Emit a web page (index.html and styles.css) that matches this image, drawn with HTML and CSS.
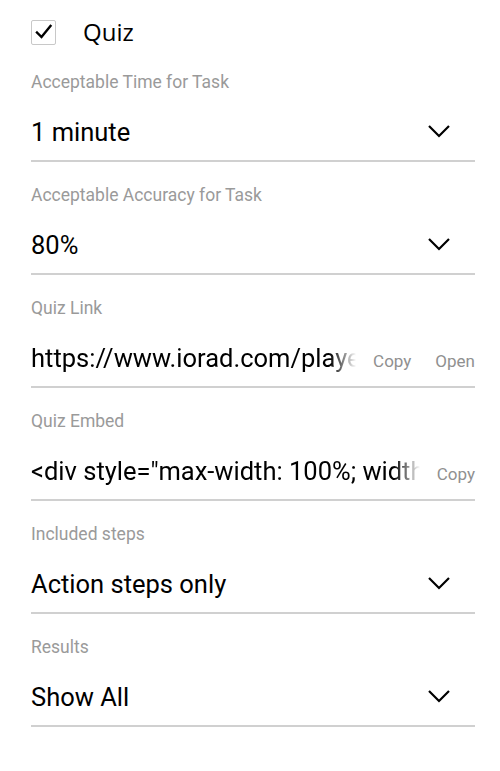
FILE: index.html
```html
<!DOCTYPE html>
<html>
<head>
<meta charset="utf-8">
<link rel="stylesheet" href="styles.css">
</head>
<body>
<div class="panel">
  <div class="quiz-row">
    <span class="checkbox">
      <svg width="18" height="16" viewBox="0 0 18 16"><polyline points="2,8.5 6.5,13 15.5,2" fill="none" stroke="#000" stroke-width="2.4" stroke-linecap="square"/></svg>
    </span>
    <span class="quiz-label">Quiz</span>
  </div>

  <div class="field">
    <div class="label">Acceptable Time for Task</div>
    <div class="row">
      <div class="value">1 minute</div>
      <svg class="chev" width="24" height="14" viewBox="0 0 24 14"><polyline points="2,2 12,12 22,2" fill="none" stroke="#000" stroke-width="2.2"/></svg>
    </div>
  </div>

  <div class="field">
    <div class="label">Acceptable Accuracy for Task</div>
    <div class="row">
      <div class="value">80%</div>
      <svg class="chev" width="24" height="14" viewBox="0 0 24 14"><polyline points="2,2 12,12 22,2" fill="none" stroke="#000" stroke-width="2.2"/></svg>
    </div>
  </div>

  <div class="field">
    <div class="label">Quiz Link</div>
    <div class="row">
      <div class="value fade">https://www.iorad.com/player/1234567/quiz</div>
      <span class="action first">Copy</span>
      <span class="action">Open</span>
    </div>
  </div>

  <div class="field">
    <div class="label">Quiz Embed</div>
    <div class="row">
      <div class="value fade">&lt;div style="max-width: 100%; width: 100%;"&gt;</div>
      <span class="action first">Copy</span>
    </div>
  </div>

  <div class="field">
    <div class="label">Included steps</div>
    <div class="row">
      <div class="value">Action steps only</div>
      <svg class="chev" width="24" height="14" viewBox="0 0 24 14"><polyline points="2,2 12,12 22,2" fill="none" stroke="#000" stroke-width="2.2"/></svg>
    </div>
  </div>

  <div class="field">
    <div class="label">Results</div>
    <div class="row">
      <div class="value">Show All</div>
      <svg class="chev" width="24" height="14" viewBox="0 0 24 14"><polyline points="2,2 12,12 22,2" fill="none" stroke="#000" stroke-width="2.2"/></svg>
    </div>
  </div>
</div>
</body>
</html>
```

FILE: styles.css
```css
html, body {
  margin: 0;
  padding: 0;
  background: #fff;
}
body {
  font-family: Roboto, "Liberation Sans", sans-serif;
  color: #000;
}
.panel {
  padding: 19px 25px 0 31px;
}
.quiz-row {
  display: flex;
  align-items: center;
  height: 26px;
  margin-bottom: 27px;
}
.checkbox {
  box-sizing: border-box;
  width: 25px;
  height: 25px;
  border: 1.5px solid #c8c8c8;
  border-radius: 2px;
  display: flex;
  align-items: center;
  justify-content: center;
}
.quiz-label {
  margin-left: 27px;
  font-family: "Open Sans", "Noto Sans", sans-serif;
  font-size: 24px;
  line-height: 26px;
}
.field {
  margin-bottom: 23px;
}
.label {
  font-size: 17.5px;
  line-height: 20px;
  color: #9a9a9a;
}
.row {
  display: flex;
  align-items: center;
  height: 66px;
  padding-top: 2px;
  border-bottom: 2px solid #d0d0d0;
}
.value {
  flex: 1;
  min-width: 0;
  font-size: 25.5px;
  line-height: 32px;
  padding-top: 10px;
  white-space: nowrap;
  overflow: hidden;
}
.fade {
  -webkit-mask-image: linear-gradient(to right, #000 calc(100% - 26px), transparent);
  mask-image: linear-gradient(to right, #000 calc(100% - 26px), transparent);
}
.action {
  flex-shrink: 0;
  font-size: 17px;
  color: #909090;
  padding-top: 15px;
  margin-left: 24px;
  white-space: nowrap;
}
.action.first {
  margin-left: 17px;
}
.chev {
  flex-shrink: 0;
  margin-right: 24px;
  margin-top: 8px;
}
```
